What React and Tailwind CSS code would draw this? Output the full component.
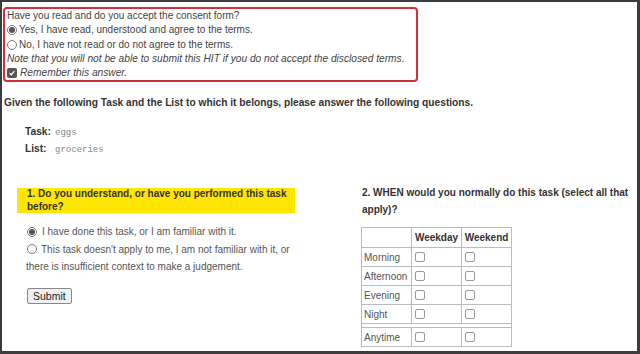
const rows = ['Morning', 'Afternoon', 'Evening', 'Night'];

function Radio({ checked }) {
  return (
    <span className="inline-flex h-[10px] w-[10px] shrink-0 items-center justify-center rounded-full border border-[#777] bg-white">
      {checked && <span className="h-[6px] w-[6px] rounded-full bg-[#555]" />}
    </span>
  );
}

function Box() {
  return <span className="inline-block h-[10px] w-[10px] rounded-[2px] border border-[#999] bg-white align-[-1px]" />;
}

export default function App() {
  return (
    <div
      className="h-[354px] w-[640px] overflow-hidden border-t-2 border-l-2 border-r-[3px] border-b-[3px] border-[#3c3c3c] bg-white text-[10px] text-[#444]"
      style={{ fontFamily: '"Liberation Sans", Arial, sans-serif' }}
    >
      <div className="h-full border-b border-[#ddd]">
        <div className="ml-px mr-[219px] mt-[5px] rounded-[4px] border-2 border-[#d0303a] pl-[2px] leading-[14.3px]">
          <div>Have you read and do you accept the consent form?</div>
          <div className="flex items-center gap-[2px]"><Radio checked />Yes, I have read, understood and agree to the terms.</div>
          <div className="flex items-center gap-[2px]"><Radio />No, I have not read or do not agree to the terms.</div>
          <div className="text-[10.2px] italic">Note that you will not be able to submit this HIT if you do not accept the disclosed terms.</div>
          <div className="flex items-center gap-[3px] text-[10.2px] italic">
            <span className="inline-flex h-[10px] w-[10px] items-center justify-center rounded-[2px] bg-[#555]">
              <svg viewBox="0 0 10 10" className="h-[8px] w-[8px]"><path d="M2 5.2 4.2 7.2 8 2.6" fill="none" stroke="#fff" strokeWidth="1.6" /></svg>
            </span>
            Remember this answer.
          </div>
        </div>

        <div className="mt-[14px] pl-[2px] text-[10.2px] font-bold leading-[14px] text-[#333]">Given the following Task and the List to which it belongs, please answer the following questions.</div>

        <div className="mt-[14px] pl-[23px] leading-[16px]">
          <div className="flex items-baseline"><span className="w-[30px] text-[10.2px] font-bold text-[#333]">Task:</span><span className="text-[9px] text-[#888]" style={{ fontFamily: '"Liberation Mono", monospace' }}>eggs</span></div>
          <div className="flex items-baseline"><span className="w-[30px] text-[10.2px] font-bold text-[#333]">List:</span><span className="text-[9px] text-[#888]" style={{ fontFamily: '"Liberation Mono", monospace' }}>groceries</span></div>
        </div>

        <div className="mt-[26px] flex items-start">
          <div className="w-[359px] pt-[4px]">
            <div className="ml-[15px] w-[278px] bg-[#ffe600] pl-[10px] text-[10px] font-bold leading-[12.5px] text-[#333]">
              1. Do you understand, or have you performed this task before?
            </div>
            <div className="ml-[24px] mt-[11px] w-[276px] leading-[16px] text-[#555]">
              <div className="mb-[2px] flex items-center gap-[5px] pl-[1px]"><Radio checked />I have done this task, or I am familiar with it.</div>
              <div><span className="ml-px mr-[4px] inline-block align-[-1px]"><Radio /></span>This task doesn't apply to me, I am not familiar with it, or there is insufficient context to make a judgement.</div>
            </div>
            <button className="ml-[25px] mt-[13px] block rounded-[2px] border border-[#888] bg-[#f0f0f0] px-[5px] py-px text-[10.5px] leading-[12px] text-[#222]">Submit</button>
          </div>
          <div className="flex-1">
            <div className="w-[275px] pl-px text-[10px] font-bold leading-[17px] text-[#333]">2. WHEN would you normally do this task (select all that apply)?</div>
            <table className="mt-[9px] border-collapse text-[10px] text-[#555]">
              <thead>
                <tr className="h-[20px]">
                  <th className="w-[50px] border border-[#bbb]" />
                  <th className="w-[50px] border border-[#bbb] px-[2px] text-[10px] font-bold text-[#333]">Weekday</th>
                  <th className="w-[50px] border border-[#bbb] px-[2px] text-[10px] font-bold text-[#333]">Weekend</th>
                </tr>
              </thead>
              <tbody>
                {rows.map((r) => (
                  <tr key={r} className="h-[19px]">
                    <td className="border border-[#bbb] px-[2px]">{r}</td>
                    <td className="border border-[#bbb] px-[3px]"><Box /></td>
                    <td className="border border-[#bbb] px-[3px]"><Box /></td>
                  </tr>
                ))}
                <tr className="h-[4px]">
                  <td colSpan={3} className="border border-[#bbb] p-0" />
                </tr>
                <tr className="h-[19px]">
                  <td className="border border-[#bbb] px-[2px]">Anytime</td>
                  <td className="border border-[#bbb] px-[3px]"><Box /></td>
                  <td className="border border-[#bbb] px-[3px]"><Box /></td>
                </tr>
              </tbody>
            </table>
          </div>
        </div>
      </div>
    </div>
  );
}
